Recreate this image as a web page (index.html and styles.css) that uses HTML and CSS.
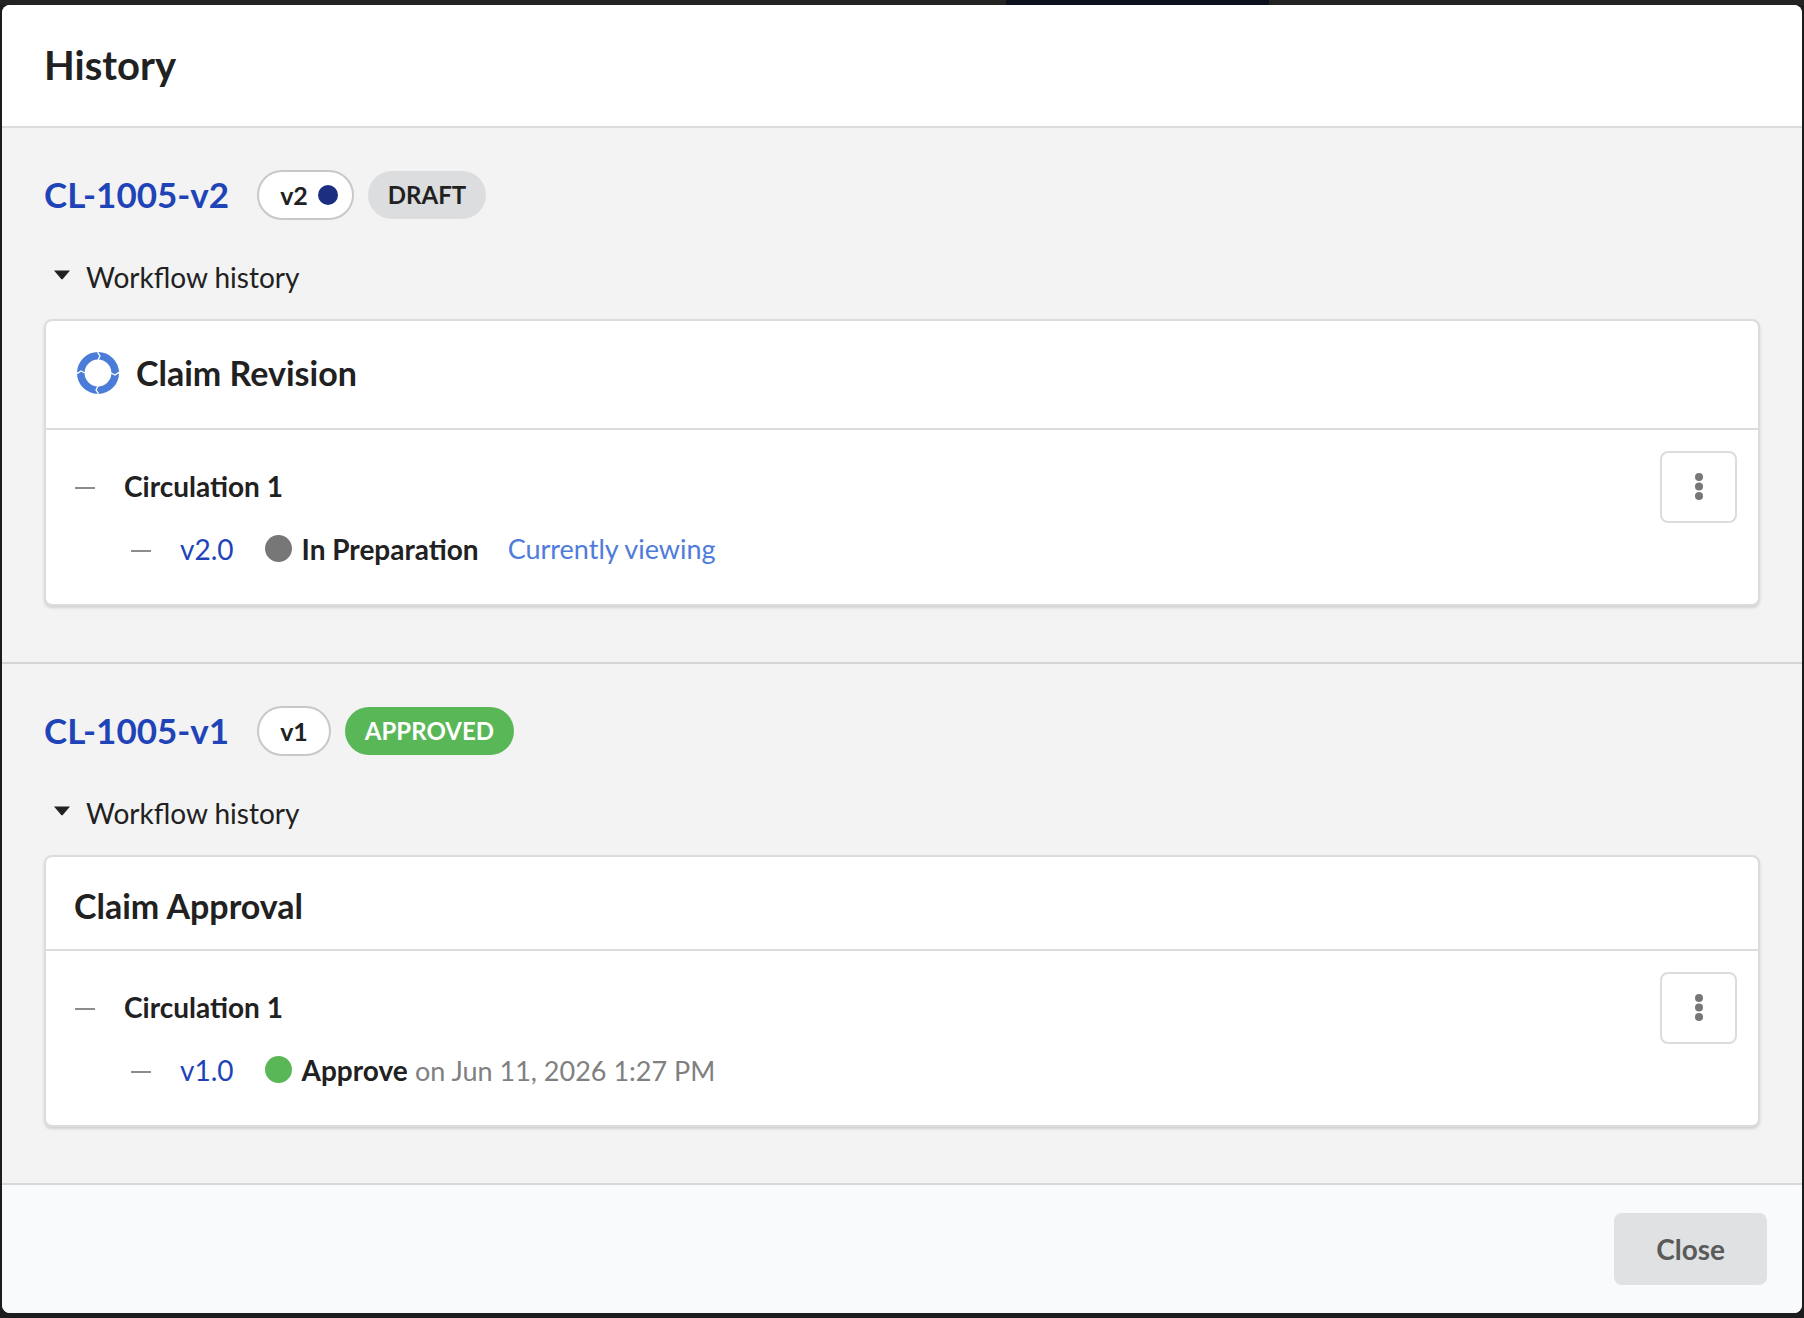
FILE: index.html
```html
<!DOCTYPE html>
<html lang="en">
<head>
<meta charset="utf-8">
<meta name="viewport" content="width=device-width, initial-scale=1">
<title>History</title>
<link rel="stylesheet" href="styles.css">
</head>
<body>
<div class="modal" role="dialog" aria-labelledby="modal-title">
  <header class="modal-header">
    <h1 class="modal-title" id="modal-title">History</h1>
  </header>

  <main class="modal-body">
    <section class="revision">
      <div class="revision-head">
        <a class="revision-link" href="#cl-1005-v2">CL-1005-v2</a>
        <div class="badges">
          <span class="badge badge-version">v2 <span class="badge-dot"></span></span>
          <span class="badge badge-draft">DRAFT</span>
        </div>
      </div>
      <details class="workflow" open>
        <summary class="workflow-toggle">
          <svg class="caret" viewBox="0 0 16 10" aria-hidden="true"><path d="M0 0.500H16L9 8.800Q8 9.800 7 8.800Z"/></svg>
          Workflow history
        </summary>
        <article class="card">
          <div class="card-header card-header-icon">
            <svg class="cycle-icon" viewBox="0 0 48 48" aria-hidden="true">
              <circle class="cycle-ring" cx="24" cy="24" r="17.200"/>
              <g class="cycle-gaps">
                <path d="M24 1L24 4L26 7L24 11"/>
                <path d="M24 1L24 4L26 7L24 11" transform="rotate(90 24 24)"/>
                <path d="M24 1L24 4L26 7L24 11" transform="rotate(180 24 24)"/>
                <path d="M24 1L24 4L26 7L24 11" transform="rotate(270 24 24)"/>
              </g>
            </svg>
            <h2 class="card-title">Claim Revision</h2>
          </div>
          <div class="card-body">
            <ul class="tree">
              <li class="tree-item">
                <div class="tree-row"><span class="tree-dash"></span><strong>Circulation 1</strong></div>
                <ul class="tree-nested">
                  <li class="tree-row">
                    <span class="tree-dash"></span>
                    <a class="version-link" href="#v2.0">v2.0</a>
                    <span class="status"><span class="status-dot"></span><strong>In Preparation</strong></span>
                    <span class="viewing">Currently viewing</span>
                  </li>
                </ul>
              </li>
            </ul>
            <button class="menu-button" type="button" aria-label="More actions">
              <svg class="dots" viewBox="0 0 8 27" aria-hidden="true"><circle cx="4" cy="4" r="4"/><circle cx="4" cy="13.500" r="4"/><circle cx="4" cy="23" r="4"/></svg>
            </button>
          </div>
        </article>
      </details>
    </section>

    <section class="revision">
      <div class="revision-head">
        <a class="revision-link" href="#cl-1005-v1">CL-1005-v1</a>
        <div class="badges">
          <span class="badge badge-version">v1</span>
          <span class="badge badge-approved">APPROVED</span>
        </div>
      </div>
      <details class="workflow" open>
        <summary class="workflow-toggle">
          <svg class="caret" viewBox="0 0 16 10" aria-hidden="true"><path d="M0 0.500H16L9 8.800Q8 9.800 7 8.800Z"/></svg>
          Workflow history
        </summary>
        <article class="card">
          <div class="card-header">
            <h2 class="card-title">Claim Approval</h2>
          </div>
          <div class="card-body">
            <ul class="tree">
              <li class="tree-item">
                <div class="tree-row"><span class="tree-dash"></span><strong>Circulation 1</strong></div>
                <ul class="tree-nested">
                  <li class="tree-row">
                    <span class="tree-dash"></span>
                    <a class="version-link" href="#v1.0">v1.0</a>
                    <span class="status"><span class="status-dot status-dot-approved"></span><span><strong>Approve</strong> <time class="status-time" datetime="2026-06-11T13:27">on Jun 11, 2026 1:27 PM</time></span></span>
                  </li>
                </ul>
              </li>
            </ul>
            <button class="menu-button" type="button" aria-label="More actions">
              <svg class="dots" viewBox="0 0 8 27" aria-hidden="true"><circle cx="4" cy="4" r="4"/><circle cx="4" cy="13.500" r="4"/><circle cx="4" cy="23" r="4"/></svg>
            </button>
          </div>
        </article>
      </details>
    </section>
  </main>

  <footer class="modal-footer">
    <button class="close-button" type="button">Close</button>
  </footer>
</div>
</body>
</html>
```
FILE: styles.css
```css
*,
*::before,
*::after {
  box-sizing: border-box;
}

html {
  background: #1c1c1e;
}

body {
  margin: 0;
  padding: 5px 2px;
  font-family: Lato, "Liberation Sans", sans-serif;
  font-size: 28px;
  line-height: 34px;
  color: #212121;
  background:
    linear-gradient(#0d111e, #0d111e) 1006px 0 / 263px 5px no-repeat,
    linear-gradient(#232323, #232323) 0 0 / 100% 5px no-repeat,
    #1c1c1e;
}

h1,
h2,
ul {
  margin: 0;
  padding: 0;
}

ul {
  list-style: none;
}

a {
  color: #1e44b8;
  text-decoration: none;
}

.modal {
  overflow: hidden;
  background: #f3f3f3;
  border-radius: 8px;
}

.modal-header {
  padding: 36px 42px 37px;
  background: #fff;
  border-bottom: 2px solid #dcdcdc;
}

.modal-title {
  font-size: 40px;
  line-height: 48px;
}

.revision {
  padding: 42px 42px 56px;
}

.revision + .revision {
  border-top: 2px solid #d4d4d4;
}

.revision-head {
  display: flex;
  align-items: center;
  gap: 28px;
  height: 50px;
}

.revision-link {
  padding-bottom: 2px;
  font-size: 35px;
  line-height: 42px;
  font-weight: 700;
}

.badges {
  display: flex;
  align-items: center;
  gap: 14px;
}

.badge {
  display: flex;
  align-items: center;
  gap: 10px;
  height: 48px;
  padding: 0 20px;
  border-radius: 24px;
  font-size: 24px;
  line-height: 28px;
  font-weight: 700;
}

.badge-version {
  height: 50px;
  padding: 0 21px;
  border: 2px solid #c8c8c8;
  border-radius: 25px;
  background: #fff;
  font-size: 25px;
}

.badge-version:has(.badge-dot) {
  padding-right: 14px;
}

.badge-dot {
  width: 20px;
  height: 20px;
  border-radius: 50%;
  background: #1b2e80;
}

.badge-draft {
  background: #dcddde;
}

.badge-approved {
  background: #5ab757;
  color: #fff;
}

.workflow {
  margin-top: 40px;
}

.workflow-toggle {
  display: flex;
  align-items: center;
  gap: 16px;
  padding-left: 10px;
  cursor: pointer;
}

.caret {
  width: 16px;
  height: 10px;
  margin-bottom: 4px;
  fill: #212121;
}

.card {
  margin-top: 25px;
  background: #fff;
  border: 2px solid #dcdcdc;
  border-radius: 8px;
  box-shadow: 0 2px 3px rgba(0, 0, 0, 0.14);
}

.card-header {
  display: flex;
  align-items: center;
  gap: 14px;
  padding: 28px 28px 22px;
  border-bottom: 2px solid #dcdcdc;
}

.card-header-icon {
  padding: 28px 28px 31px;
}

.cycle-icon {
  width: 48px;
  height: 48px;
}

.cycle-ring {
  fill: none;
  stroke: #4b7cd8;
  stroke-width: 7.6;
}

.cycle-gaps {
  fill: none;
  stroke: #fff;
  stroke-width: 1.3;
}

.card-title {
  font-size: 34px;
  line-height: 42px;
}

.card-body {
  display: flex;
  align-items: flex-start;
  justify-content: space-between;
  padding: 21px 21px 38px 28px;
}

.tree {
  padding-top: 18px;
}

.tree-row {
  display: flex;
  align-items: center;
  gap: 29px;
}

.tree-dash {
  width: 20px;
  height: 2px;
  margin-left: 1px;
  margin-top: 4px;
  background: #8c8c8c;
}

.tree-nested {
  margin-top: 29px;
  padding-left: 56px;
}

.status {
  display: flex;
  align-items: center;
  gap: 10px;
  margin-left: 2px;
}

.status-dot {
  width: 27px;
  height: 27px;
  margin-bottom: 1px;
  border-radius: 50%;
  background: #777;
}

.status-dot-approved {
  background: #5ab757;
}

.status-time {
  font-size: 27px;
  line-height: 28px;
  color: #808080;
}

.viewing {
  font-size: 27px;
  color: #4f7bdb;
}

.menu-button {
  display: flex;
  align-items: center;
  justify-content: center;
  width: 77px;
  height: 72px;
  padding: 0 0 1px;
  background: #fff;
  border: 2px solid #dcdcdc;
  border-radius: 8px;
}

.dots {
  width: 8px;
  height: 27px;
  fill: #777;
}

.modal-footer {
  display: flex;
  justify-content: flex-end;
  padding: 28px 35px;
  background: #f9fafc;
  border-top: 2px solid #d8d8d8;
}

.close-button {
  height: 72px;
  padding: 0 42px;
  border: 0;
  border-radius: 8px;
  background: #e0e1e2;
  color: #5a5a5a;
  font: inherit;
  font-weight: 700;
}
```
